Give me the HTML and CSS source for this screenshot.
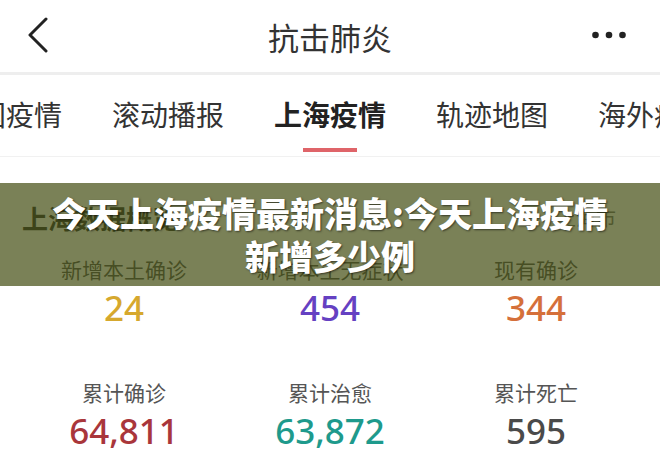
FILE: index.html
```html
<!DOCTYPE html>
<html lang="zh-CN">
<head>
    <meta charset="UTF-8">
    <meta name="viewport" content="width=device-width, initial-scale=1.0">
    <title>抗击肺炎</title>
    <link rel="stylesheet" href="styles.css">
</head>
<body>
    <div class="page">
        <div class="topbar">
            <svg class="back" width="20" height="36" viewBox="0 0 20 36">
                <polyline points="18,2 2,18 18,34" fill="none" stroke="#222" stroke-width="3" stroke-linecap="round" stroke-linejoin="round"/>
            </svg>
            <h1 class="title">抗击肺炎</h1>
            <svg class="more" width="34" height="8" viewBox="0 0 34 8">
                <circle cx="3.5" cy="4" r="3.3" fill="#222"/>
                <circle cx="17" cy="4" r="3.3" fill="#222"/>
                <circle cx="30.5" cy="4" r="3.3" fill="#222"/>
            </svg>
        </div>

        <div class="tabs">
            <div class="tab">全国疫情</div>
            <div class="tab">滚动播报</div>
            <div class="tab active">上海疫情</div>
            <div class="tab">轨迹地图</div>
            <div class="tab">海外疫情</div>
        </div>

        <div class="overview">
            <div class="overview-head">
                <h2>上海数据概览</h2>
                <span class="source">上海市</span>
            </div>
            <div class="stats">
                <div class="stat">
                    <div class="label">新增本土确诊</div>
                    <div class="num gold">24</div>
                </div>
                <div class="stat">
                    <div class="label">新增本土无症状</div>
                    <div class="num purple">454</div>
                </div>
                <div class="stat">
                    <div class="label">现有确诊</div>
                    <div class="num orange">344</div>
                </div>
                <div class="stat">
                    <div class="label">累计确诊</div>
                    <div class="num red">64,811</div>
                </div>
                <div class="stat">
                    <div class="label">累计治愈</div>
                    <div class="num teal">63,872</div>
                </div>
                <div class="stat">
                    <div class="label">累计死亡</div>
                    <div class="num grey">595</div>
                </div>
            </div>
        </div>

        <div class="banner">今天上海疫情最新消息:今天上海疫情<br>新增多少例</div>
    </div>
</body>
</html>
```

FILE: styles.css
```css
* { box-sizing: border-box; margin: 0; padding: 0; }
body { font-family: "Noto Sans CJK SC", "Noto Sans", sans-serif; background: #fff; color: #333; }
.page { position: relative; width: 660px; height: 469px; overflow: hidden; }

.topbar { height: 75px; display: flex; align-items: center; justify-content: space-between; padding: 0 34px 0 28px; border-bottom: 3px solid #eeeeee; }
.back { margin-top: -3px; }
.title { font-size: 31px; font-weight: 400; color: #333; margin-left: 20px; }
.more { margin-top: -3px; }

.tabs { height: 82px; display: flex; gap: 50px; margin-left: -50px; border-bottom: 1px solid #f1f1f1; white-space: nowrap; }
.tab { flex: none; display: flex; flex-direction: column; align-items: center; font-size: 28px; line-height: 40px; padding-top: 19px; color: #333; }
.tab.active { font-weight: 700; color: #222; }
.tab.active::after { content: ""; display: block; width: 54px; height: 4px; margin-top: 14px; background: #df6469; }

.overview { padding-top: 40px; }
.overview-head { display: flex; justify-content: space-between; align-items: center; padding: 0 44px 0 22px; height: 40px; }
.overview-head h2 { font-size: 26px; font-weight: 700; color: #333; }
.source { font-size: 20px; color: #777; }

.stats { display: grid; grid-template-columns: repeat(3, 206px); row-gap: 49px; padding: 0 21px; margin-top: 17px; }
.stat { text-align: center; }
.label { font-size: 21px; line-height: 30px; color: #555; }
.num { font-family: "Noto Sans", sans-serif; font-size: 35px; font-weight: 500; line-height: 40px; margin-top: 4px; }
.gold { color: #d6a82e; }
.purple { color: #6541c2; }
.orange { color: #d5703a; }
.red { color: #a9363b; }
.teal { color: #1e9a8c; }
.grey { color: #4a4a4a; }

/* headline strip laid over the page */
.banner { position: absolute; left: 0; top: 183px; width: 660px; height: 103px; padding-top: 8px; background: rgba(65, 76, 16, 0.7); color: #fff; font-size: 34px; font-weight: 900; line-height: 43px; text-align: center; text-shadow: 1px 1px 2px rgba(0, 0, 0, 0.55); }
```
